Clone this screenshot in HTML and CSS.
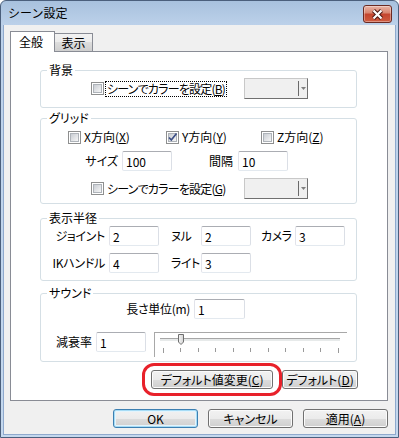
FILE: index.html
```html
<!DOCTYPE html>
<html lang="ja">

<head>
    <meta charset="UTF-8">
    <title>シーン設定</title>
    <link rel="stylesheet" href="styles.css">
</head>

<body>

    <div class="window">
        <div class="titlebar">
            <span class="title">シーン設定</span>
            <span class="close">
                <svg width="13" height="11" viewBox="0 0 13 11">
                    <path d="M2.5 1.5 L10.5 9.5 M10.5 1.5 L2.5 9.5" stroke="#4a1510" stroke-width="4.2" fill="none"/>
                    <path d="M2.5 1.5 L10.5 9.5 M10.5 1.5 L2.5 9.5" stroke="#fff" stroke-width="2.2" fill="none"/>
                </svg>
            </span>
        </div>

        <div class="client">
            <div class="tabs">
                <div class="tab active">全般</div>
                <div class="tab">表示</div>
            </div>

            <div class="panel">
                <!-- 背景 -->
                <div class="group g1">
                    <div class="group-title">背景</div>
                    <div class="row row-color">
                        <label class="check wide"><span class="cb"><i></i></span><span class="focus tight">シーンでカラーを設定(<u>B</u>)</span></label>
                        <div class="combo"><span class="combo-arrow"><svg width="5" height="3" viewBox="0 0 5 3"><path d="M0 0 H5 L2.5 3 Z" fill="#808080"/></svg></span></div>
                    </div>
                </div>

                <!-- グリッド -->
                <div class="group g2">
                    <div class="group-title">グリッド</div>
                    <div class="row row-axes">
                        <label class="check axis-x"><span class="cb"><i></i></span>X方向(<u>X</u>)</label>
                        <label class="check axis-y"><span class="cb"><i><svg width="11" height="11" viewBox="0 0 11 11"><path d="M2 5.5 L4.3 8 L9.5 1.5" stroke="#3d4f86" stroke-width="1.7" fill="none"/></svg></i></span>Y方向(<u>Y</u>)</label>
                        <label class="check"><span class="cb"><i></i></span>Z方向(<u>Z</u>)</label>
                    </div>
                    <div class="row row-fields">
                        <span class="lbl w-size">サイズ</span>
                        <input class="field" type="text" value="100">
                        <span class="lbl w-step">間隔</span>
                        <input class="field" type="text" value="10">
                    </div>
                    <div class="row row-color">
                        <label class="check wide"><span class="cb"><i></i></span><span class="tight">シーンでカラーを設定(<u>G</u>)</span></label>
                        <div class="combo"><span class="combo-arrow"><svg width="5" height="3" viewBox="0 0 5 3"><path d="M0 0 H5 L2.5 3 Z" fill="#808080"/></svg></span></div>
                    </div>
                </div>

                <!-- 表示半径 -->
                <div class="group g3">
                    <div class="group-title">表示半径</div>
                    <div class="row row-first">
                        <span class="lbl w-joint">ジョイント</span>
                        <input class="field" type="text" value="2">
                        <span class="lbl-left w-null">ヌル</span>
                        <input class="field" type="text" value="2">
                        <span class="lbl-left w-cam">カメラ</span>
                        <input class="field" type="text" value="3">
                    </div>
                    <div class="row row-fields">
                        <span class="lbl w-joint">IKハンドル</span>
                        <input class="field" type="text" value="4">
                        <span class="lbl-left w-null">ライト</span>
                        <input class="field" type="text" value="3">
                    </div>
                </div>

                <!-- サウンド -->
                <div class="group g4">
                    <div class="group-title">サウンド</div>
                    <div class="row row-unit">
                        <span class="lbl w-unit">長さ単位(m)</span>
                        <input class="field wide-field" type="text" value="1">
                    </div>
                    <div class="row row-decay">
                        <span class="lbl w-decay">減衰率</span>
                        <input class="field" type="text" value="1">
                        <svg class="slider" width="193" height="25" viewBox="0 0 193 25">
                            <defs>
                                <linearGradient id="thumb" x1="0" y1="0" x2="1" y2="0">
                                    <stop offset="0" stop-color="#f6f6f6"/>
                                    <stop offset="1" stop-color="#d4d4d4"/>
                                </linearGradient>
                            </defs>
                            <path d="M0 0.5 H193 M0.5 0 V25" stroke="#a8a8a8" fill="none"/>
                            <rect x="6" y="6" width="180" height="3" fill="#e7eaea"/>
                            <path d="M6 6.5 H186" stroke="#a6a6a6"/>
                            <path d="M24.5 2.5 H29.5 V10 L27 12.5 L24.5 10 Z" fill="url(#thumb)" stroke="#6f6f6f"/>
                            <path d="M9.5 16 V21 M26.5 16 V20 M44.5 16 V20 M61.5 16 V20 M79.5 16 V20 M96.5 16 V20 M114.5 16 V20 M131.5 16 V20 M149.5 16 V20 M166.5 16 V20 M184.5 16 V21" stroke="#9a9a9a"/>
                        </svg>
                    </div>
                </div>

                <div class="btn-row">
                    <div class="highlight">
                        <button class="btn btn-change">デフォルト値変更(<u>C</u>)</button>
                    </div>
                    <button class="btn btn-default">デフォルト(<u>D</u>)</button>
                </div>
            </div>

            <div class="actions">
                <button class="btn btn-main primary">OK</button>
                <button class="btn btn-main">キャンセル</button>
                <button class="btn btn-main">適用(<u>A</u>)</button>
            </div>
        </div>
    </div>

</body>

</html>
```

FILE: styles.css
```css
html,
body {
    margin: 0;
    padding: 0;
}

body {
    width: 399px;
    height: 438px;
    overflow: hidden;
    background: #fff;
    font-family: "Noto Sans CJK JP", "Noto Sans", sans-serif;
    font-size: 12px;
    line-height: 14px;
    color: #000;
    font-feature-settings: "palt";
}

u {
    text-decoration: underline;
    text-underline-offset: 1px;
}

/* Window frame */

.window {
    box-sizing: border-box;
    width: 399px;
    height: 438px;
    border: 1px solid #4b5f7c;
    border-radius: 6px 6px 0 0;
    background: linear-gradient(#a8c1de 0, #bcd1ea 24px, #c4d8ee 100%);
    display: flex;
    flex-direction: column;
}

.titlebar {
    height: 24px;
    flex: none;
    display: flex;
    justify-content: space-between;
    padding: 0 6px 0 7px;
}

.title {
    line-height: 24px;
    font-feature-settings: normal;
}

.close {
    box-sizing: border-box;
    margin-top: 4px;
    width: 29px;
    height: 18px;
    border: 1px solid #6b2a22;
    border-radius: 3px;
    background: linear-gradient(#eab4a6 0, #d98670 42%, #c4452e 52%, #cf5c40 100%);
    box-shadow: inset 0 0 0 1px rgba(255, 255, 255, 0.35);
    display: flex;
    align-items: center;
    justify-content: center;
}

.client {
    flex: 1;
    margin: 0 2px 2px;
    background: #f0f0f0;
    border: 1px solid #8fa9cd;
    border-top: 0;
    padding: 6px 7px 0 6px;
    display: flex;
    flex-direction: column;
}

/* Tabs */

.tabs {
    display: flex;
    align-items: flex-end;
    height: 20px;
}

.tab {
    box-sizing: border-box;
    height: 18px;
    width: 38px;
    border: 1px solid #898c95;
    border-bottom: 0;
    border-left: 0;
    background: linear-gradient(#f2f2f2, #ebebeb 50%, #dddddd 50%, #cfcfcf);
    text-align: center;
    line-height: 17px;
    font-feature-settings: normal;
}

.tab.active {
    width: 45px;
    height: 21px;
    margin-bottom: -1px;
    border-left: 1px solid #898c95;
    background: #fff;
    position: relative;
    z-index: 1;
    line-height: 20px;
    padding-right: 3px;
}

.panel {
    box-sizing: border-box;
    width: 378px;
    border: 1px solid #898c95;
    background: #fff;
    padding-bottom: 4px;
}

/* Group boxes */

.group {
    border: 1px solid #d5dfe5;
    border-radius: 3px;
    margin: 0 30px 0 29px;
}

.group-title {
    width: fit-content;
    margin: -8px 0 0 6px;
    padding: 0 2px;
    background: #fff;
    line-height: 14px;
}

.g1 {
    margin-top: 18px;
    padding-bottom: 8px;
}

.g2 {
    margin-top: 10px;
    padding-bottom: 4px;
}

.g3 {
    margin-top: 14px;
    padding-bottom: 7px;
}

.g4 {
    margin-top: 12px;
    padding-bottom: 4px;
}

.row {
    display: flex;
    align-items: center;
}

.row-color {
    height: 21px;
    margin-top: 1px;
    padding-left: 50px;
}

.g2 .row-color {
    margin-top: 7px;
}

.row-axes {
    height: 14px;
    margin-top: 5px;
    padding-left: 27px;
}

.row-fields {
    margin-top: 7px;
}

.row-first {
    margin-top: 1px;
}

.row-unit {
    margin-top: -1px;
}

.row-decay {
    margin-top: 13px;
    align-items: flex-start;
}

/* Checkboxes */

.check {
    display: flex;
    align-items: center;
    white-space: nowrap;
}

.check.wide {
    width: 153px;
}

.axis-x {
    width: 98px;
}

.axis-y {
    width: 95px;
}

.cb {
    flex: none;
    box-sizing: border-box;
    width: 13px;
    height: 13px;
    border: 1px solid #8e8f8f;
    background: #fff;
    padding: 1px;
    margin-right: 3px;
}

.cb i {
    display: block;
    box-sizing: border-box;
    width: 9px;
    height: 9px;
    border: 1px solid #aeb3b9;
    background: linear-gradient(135deg, #c9cdd3, #f6f6f6);
}

.cb svg {
    display: block;
    margin: -2px 0 0 -2px;
}

.tight {
    letter-spacing: -0.8px;
}

.focus {
    margin-left: -2px;
    padding: 0 1px;
    border: 1px dotted #000;
}

/* Text fields */

.lbl {
    text-align: right;
    margin-right: 4px;
    white-space: nowrap;
}

.lbl-left {
    box-sizing: border-box;
    flex: none;
    white-space: nowrap;
    letter-spacing: -0.5px;
}

.w-size {
    width: 77px;
}

.w-step {
    width: 61px;
    margin-right: 5px;
}

.w-joint {
    width: 64px;
    letter-spacing: -0.3px;
}

.w-null {
    width: 42px;
    padding-left: 12px;
}

.w-cam {
    width: 44px;
    padding-left: 10px;
}

.w-unit {
    width: 149px;
    letter-spacing: -0.3px;
}

.w-decay {
    width: 51px;
    line-height: 20px;
}

.field {
    box-sizing: border-box;
    flex: none;
    width: 50px;
    height: 20px;
    margin: 0;
    padding: 0 3px;
    border: 1px solid;
    border-color: #abadb3 #dbdfe6 #e3e9ef #e2e3ea;
    border-radius: 2px;
    font: inherit;
    font-size: 12px;
    color: #000;
    background: #fff;
    outline: none;
}

.wide-field {
    width: 51px;
}

.slider {
    display: block;
    margin-left: 8px;
}

/* Drop-down */

.combo {
    box-sizing: border-box;
    width: 64px;
    height: 21px;
    border: 1px solid;
    border-color: #c8c8c8 #707070 #707070 #c8c8c8;
    background: #f0f0f0;
    display: flex;
    justify-content: flex-end;
    align-items: center;
}

.combo-arrow {
    width: 8px;
    height: 15px;
    border-left: 1px solid #6a6a6a;
    display: flex;
    align-items: center;
    justify-content: center;
}

/* Buttons */

.btn {
    box-sizing: border-box;
    height: 19px;
    margin: 0;
    padding: 0;
    border: 1px solid #707070;
    border-radius: 3px;
    background: linear-gradient(#f2f2f2, #ebebeb 50%, #dddddd 50%, #cfcfcf);
    box-shadow: inset 0 0 0 1px #fbfbfb;
    font: inherit;
    font-size: 12px;
    line-height: 16px;
    color: #000;
    display: flex;
    align-items: center;
    justify-content: center;
    white-space: nowrap;
}

.btn-row {
    display: flex;
    justify-content: flex-end;
    align-items: center;
    margin-top: 1px;
    padding-right: 29px;
}

.highlight {
    border: 3px solid #e8212a;
    border-radius: 12px;
    padding: 4px 6px;
}

.btn-change {
    width: 122px;
}

.btn-default {
    width: 76px;
}

.actions {
    display: flex;
    justify-content: flex-end;
    gap: 10px;
    margin-top: 8px;
}

.btn-main {
    width: 85px;
}

.btn.primary {
    border-color: #3c7fb1;
    box-shadow: inset 0 0 0 1px #a6dcf6, inset 0 0 0 2px #e4f4fc;
}
```
